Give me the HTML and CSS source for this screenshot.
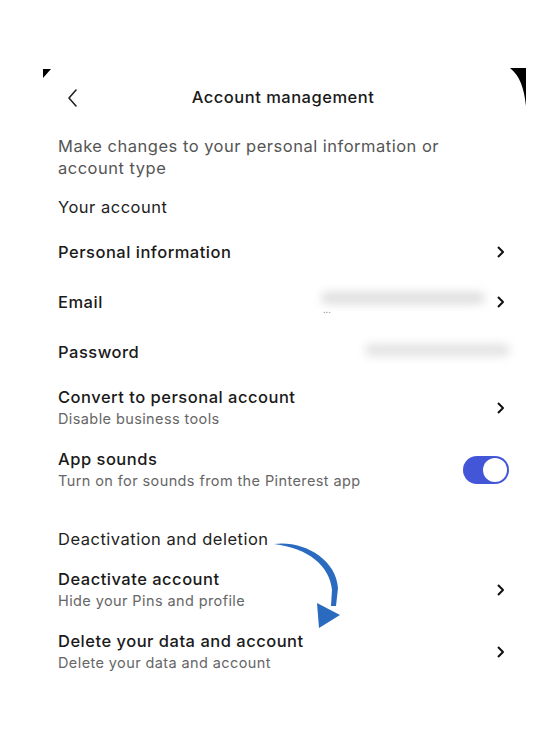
FILE: index.html
```html
<!DOCTYPE html>
<html>
<head>
<meta charset="utf-8">
<link rel="stylesheet" href="styles.css">
</head>
<body>
<div class="screen">
  <div class="corner corner-left"></div>
  <svg class="corner corner-right" width="16" height="38" viewBox="0 0 16 38"><path d="M0 0 H16 V38 C14 20 10 8 0 0 Z" fill="#000"/></svg>

  <header class="topbar">
    <svg class="back" width="14" height="20" viewBox="0 0 14 20"><polyline points="10,2 3,10 10,18" fill="none" stroke="#222" stroke-width="1.6" stroke-linecap="round" stroke-linejoin="round"/></svg>
    <h1 class="title">Account management</h1>
  </header>

  <p class="desc">Make changes to your personal information or account type</p>

  <div class="section">Your account</div>

  <div class="row single">
    <div class="text"><div class="label">Personal information</div></div>
    <svg class="chev" width="10" height="14" viewBox="0 0 10 14"><polyline points="3,2 8,7 3,12" fill="none" stroke="#111" stroke-width="2" stroke-linejoin="round"/></svg>
  </div>

  <div class="row single">
    <div class="text"><div class="label">Email</div></div>
    <div class="value email-value"><div class="blur blur-email"></div><span class="dots">...</span></div>
    <svg class="chev" width="10" height="14" viewBox="0 0 10 14"><polyline points="3,2 8,7 3,12" fill="none" stroke="#111" stroke-width="2" stroke-linejoin="round"/></svg>
  </div>

  <div class="row single">
    <div class="text"><div class="label">Password</div></div>
    <div class="value pass-value"><div class="blur blur-pass"></div></div>
  </div>

  <div class="row double">
    <div class="text"><div class="label">Convert to personal account</div><div class="sub">Disable business tools</div></div>
    <svg class="chev" width="10" height="14" viewBox="0 0 10 14"><polyline points="3,2 8,7 3,12" fill="none" stroke="#111" stroke-width="2" stroke-linejoin="round"/></svg>
  </div>

  <div class="row double">
    <div class="text"><div class="label">App sounds</div><div class="sub">Turn on for sounds from the Pinterest app</div></div>
    <div class="toggle"><div class="knob"></div></div>
  </div>

  <div class="section section-gap">Deactivation and deletion</div>

  <div class="row double">
    <div class="text"><div class="label">Deactivate account</div><div class="sub">Hide your Pins and profile</div></div>
    <svg class="chev" width="10" height="14" viewBox="0 0 10 14"><polyline points="3,2 8,7 3,12" fill="none" stroke="#111" stroke-width="2" stroke-linejoin="round"/></svg>
  </div>

  <div class="row double">
    <div class="text"><div class="label">Delete your data and account</div><div class="sub">Delete your data and account</div></div>
    <svg class="chev" width="10" height="14" viewBox="0 0 10 14"><polyline points="3,2 8,7 3,12" fill="none" stroke="#111" stroke-width="2" stroke-linejoin="round"/></svg>
  </div>

  <svg class="arrow" width="80" height="95" viewBox="0 0 80 95">
    <path d="M2 4 C30 0 64 18 66 48 L64 66 L59 66 L60 50 C58 26 36 8 2 4 Z" fill="#2a6bbf"/>
    <polygon points="45,63 68,75 47,88" fill="#2a6bbf"/>
  </svg>
</div>
</body>
</html>
```

FILE: styles.css
```css
* { box-sizing: border-box; }
html, body { margin: 0; padding: 0; background: #fff; }
body { font-family: Inter, "Noto Sans", sans-serif; color: #111; }

.screen {
  position: relative;
  width: 550px;
  height: 736px;
  padding: 72px 45px 0 58px;
}

.corner { position: absolute; }
.corner-left {
  left: 43px; top: 69px;
  width: 0; height: 0;
  border-top: 9px solid #000;
  border-right: 8px solid transparent;
}
.corner-right { left: 510px; top: 68px; }

.topbar {
  position: relative;
  height: 50px;
  display: flex;
  align-items: center;
  justify-content: center;
  margin-left: -58px;
  margin-right: -45px;
  padding-left: 16px;
}
.back { position: absolute; left: 66px; top: 16px; }
.title {
  margin: 0;
  font-size: 16.5px;
  font-weight: 500;
  color: #1a1a1a;
  letter-spacing: 0.5px;
}

.desc {
  margin: 13px 0 0;
  font-size: 16.5px;
  line-height: 22px;
  letter-spacing: 0.5px;
  color: #555;
  width: 410px;
}

.section {
  height: 40px;
  display: flex;
  align-items: center;
  margin-top: 8px;
  font-size: 16.5px;
  letter-spacing: 0.5px;
  color: #222;
}
.section-gap { margin-top: 18px; }

.row {
  display: flex;
  align-items: center;
}
.row.single { height: 50px; }
.row.double { height: 62px; }
.row .text { flex: 1; }
.label { font-size: 16.5px; font-weight: 500; line-height: 22px; letter-spacing: 0.5px; color: #1a1a1a; }
.sub { font-size: 14.5px; line-height: 22px; letter-spacing: 0.4px; color: #666; }

.chev { flex: none; }

.value { position: relative; height: 20px; }
.email-value { width: 172px; margin-right: 6px; }
.pass-value { width: 150px; margin-right: -5px; }
.blur {
  position: absolute;
  background: #d6d6d6;
  filter: blur(5px);
  border-radius: 8px;
  height: 12px;
}
.blur-email { left: 4px; top: 0; width: 164px; opacity: 0.8; }
.blur-pass { right: 0; top: 2px; width: 145px; opacity: 0.7; }
.dots {
  position: absolute;
  left: 6px; top: 12px;
  font-size: 9px;
  color: #999;
}

.toggle {
  width: 46px;
  height: 28px;
  border-radius: 14px;
  background: #4456d8;
  display: flex;
  align-items: center;
  justify-content: flex-end;
  padding: 2px;
  margin-right: -4px;
}
.knob {
  width: 24px;
  height: 24px;
  border-radius: 50%;
  background: #fff;
}

.arrow { position: absolute; left: 272px; top: 540px; }
```
